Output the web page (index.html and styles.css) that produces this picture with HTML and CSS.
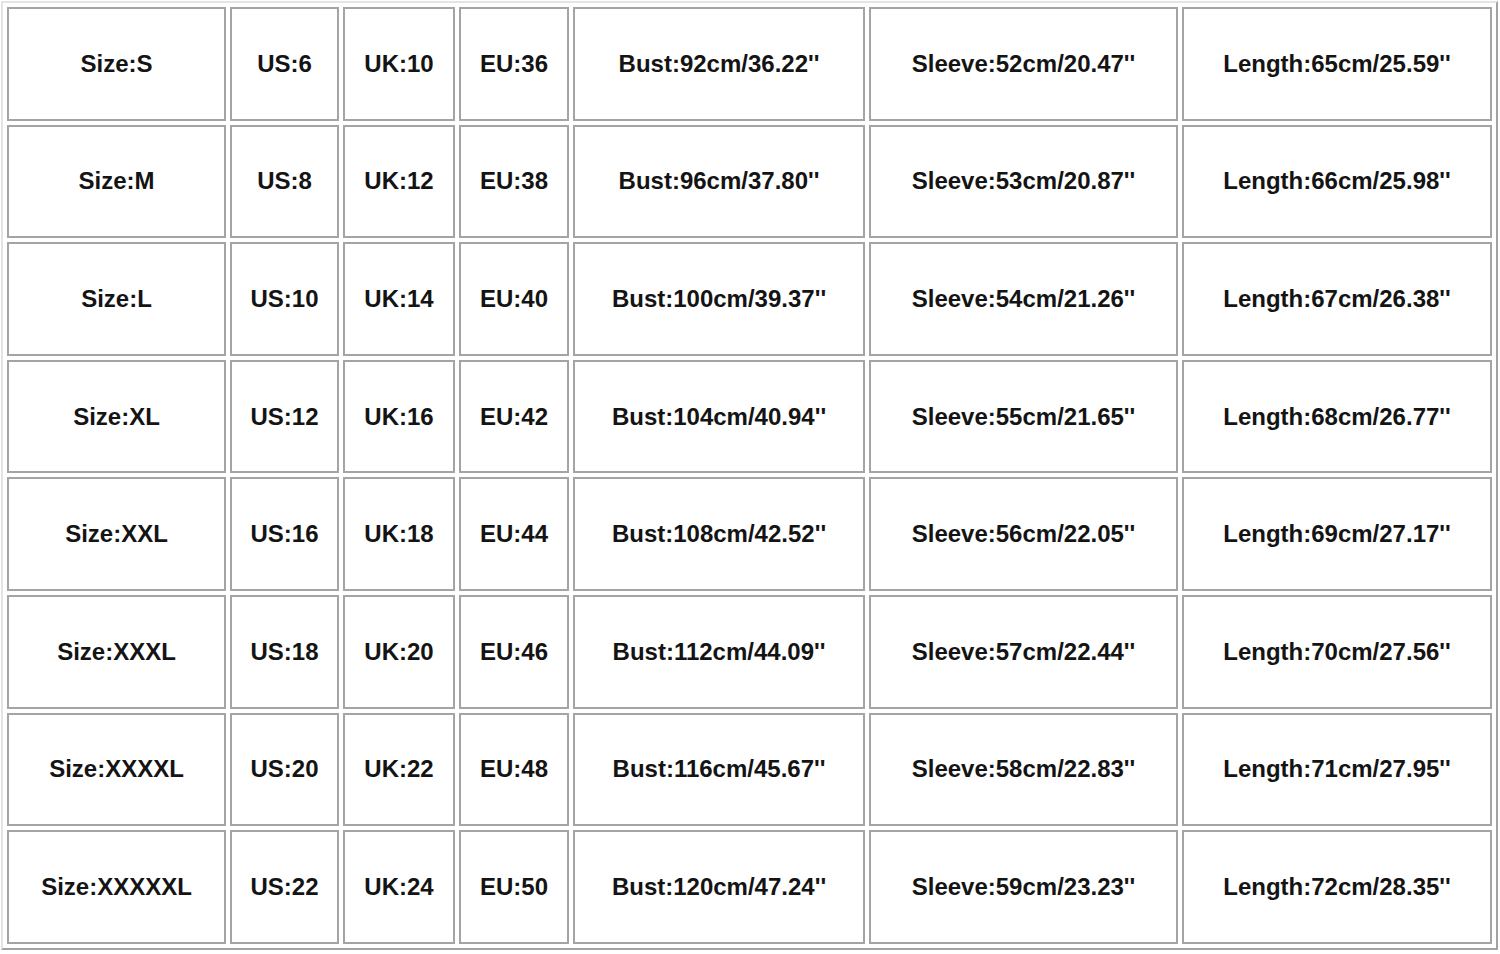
FILE: index.html
```html
<!DOCTYPE html>
<html lang="en">
<head>
<meta charset="utf-8">
<title>Size Chart</title>
<link rel="stylesheet" href="styles.css">
</head>
<body class="page">
<table class="size-chart">
  <colgroup>
    <col class="c-size">
    <col class="c-us">
    <col class="c-uk">
    <col class="c-eu">
    <col class="c-bust">
    <col class="c-sleeve">
    <col class="c-length">
  </colgroup>
  <tbody>
    <tr class="row">
      <td class="cell">Size:S</td><td class="cell">US:6</td><td class="cell">UK:10</td><td class="cell">EU:36</td>
      <td class="cell">Bust:92cm/36.22''</td><td class="cell">Sleeve:52cm/20.47''</td><td class="cell">Length:65cm/25.59''</td>
    </tr>
    <tr class="row">
      <td class="cell">Size:M</td><td class="cell">US:8</td><td class="cell">UK:12</td><td class="cell">EU:38</td>
      <td class="cell">Bust:96cm/37.80''</td><td class="cell">Sleeve:53cm/20.87''</td><td class="cell">Length:66cm/25.98''</td>
    </tr>
    <tr class="row">
      <td class="cell">Size:L</td><td class="cell">US:10</td><td class="cell">UK:14</td><td class="cell">EU:40</td>
      <td class="cell">Bust:100cm/39.37''</td><td class="cell">Sleeve:54cm/21.26''</td><td class="cell">Length:67cm/26.38''</td>
    </tr>
    <tr class="row">
      <td class="cell">Size:XL</td><td class="cell">US:12</td><td class="cell">UK:16</td><td class="cell">EU:42</td>
      <td class="cell">Bust:104cm/40.94''</td><td class="cell">Sleeve:55cm/21.65''</td><td class="cell">Length:68cm/26.77''</td>
    </tr>
    <tr class="row">
      <td class="cell">Size:XXL</td><td class="cell">US:16</td><td class="cell">UK:18</td><td class="cell">EU:44</td>
      <td class="cell">Bust:108cm/42.52''</td><td class="cell">Sleeve:56cm/22.05''</td><td class="cell">Length:69cm/27.17''</td>
    </tr>
    <tr class="row">
      <td class="cell">Size:XXXL</td><td class="cell">US:18</td><td class="cell">UK:20</td><td class="cell">EU:46</td>
      <td class="cell">Bust:112cm/44.09''</td><td class="cell">Sleeve:57cm/22.44''</td><td class="cell">Length:70cm/27.56''</td>
    </tr>
    <tr class="row">
      <td class="cell">Size:XXXXL</td><td class="cell">US:20</td><td class="cell">UK:22</td><td class="cell">EU:48</td>
      <td class="cell">Bust:116cm/45.67''</td><td class="cell">Sleeve:58cm/22.83''</td><td class="cell">Length:71cm/27.95''</td>
    </tr>
    <tr class="row">
      <td class="cell">Size:XXXXXL</td><td class="cell">US:22</td><td class="cell">UK:24</td><td class="cell">EU:50</td>
      <td class="cell">Bust:120cm/47.24''</td><td class="cell">Sleeve:59cm/23.23''</td><td class="cell">Length:72cm/28.35''</td>
    </tr>
  </tbody>
</table>
</body>
</html>
```

FILE: styles.css
```css
html, .page {
  margin: 0;
  padding: 0;
  background: #ffffff;
}

.size-chart {
  margin: 1px 0 0 1px;
  table-layout: fixed;
  border-collapse: separate;
  border-spacing: 4px;
  border-style: solid;
  border-width: 2px;
  border-color: #e4e4e4 #a2a2a2 #a2a2a2 #e4e4e4;
  font-family: "Liberation Sans", Arial, sans-serif;
  font-weight: bold;
  font-size: 24px;
  color: #141414;
}

.c-size   { width: 219px; }
.c-us     { width: 109px; }
.c-uk     { width: 112px; }
.c-eu     { width: 110px; }
.c-bust   { width: 292px; }
.c-sleeve { width: 309px; }
.c-length { width: 310px; }

.row {
  height: 113.6px;
}

.cell {
  box-sizing: border-box;
  height: 113.6px;
  padding: 0;
  border: 2px solid #a4a4a4;
  text-align: center;
  vertical-align: middle;
  white-space: nowrap;
  line-height: 1;
}
```
